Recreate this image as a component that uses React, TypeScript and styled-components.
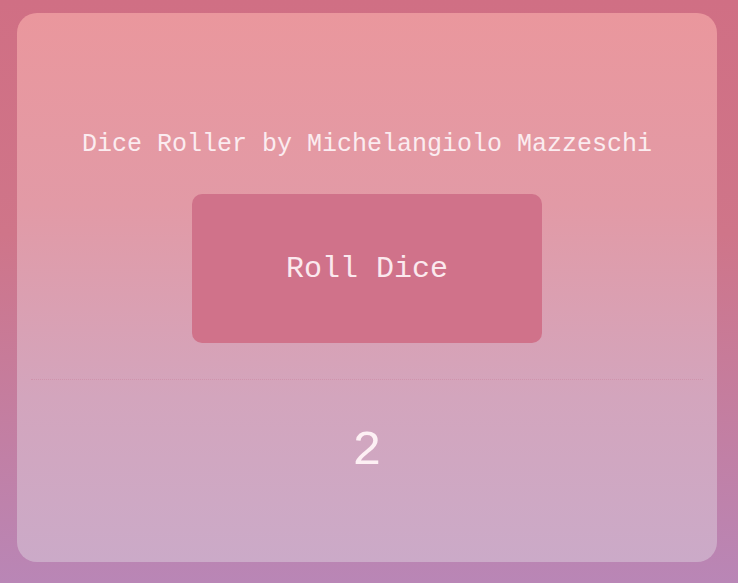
import React, { useState } from "react";
import styled, { createGlobalStyle } from "styled-components";

const Global = createGlobalStyle`
  html, body { margin: 0; padding: 0; }
  body {
    width: 738px;
    height: 583px;
    overflow: hidden;
    background: linear-gradient(180deg, #d06f84 0%, #cf7589 40%, #b986b6 100%);
    font-family: "Liberation Mono", "Courier New", monospace;
  }
`;

const Page = styled.div`
  width: 738px;
  height: 583px;
  box-sizing: border-box;
  padding: 13px 21px 21px 17px;
  display: flex;
`;

const Card = styled.main`
  flex: 1;
  border-radius: 20px;
  background: linear-gradient(180deg, #ea979d 0%, #e29aa6 35%, #d3a5bd 70%, #cbaac8 100%);
  display: flex;
  flex-direction: column;
  align-items: center;
  padding-top: 117px;
`;

const Title = styled.h1`
  margin: 0;
  font-family: "Liberation Mono", "Courier New", monospace;
  font-weight: normal;
  font-size: 25px;
  line-height: 30px;
  color: #fbecf0;
`;

const RollButton = styled.button`
  margin-top: 34px;
  width: 350px;
  height: 149px;
  border: none;
  border-radius: 10px;
  background: #d0728a;
  color: #fbe9ee;
  font-family: "Liberation Mono", "Courier New", monospace;
  font-size: 30px;
  cursor: pointer;
  padding: 0;
`;

const Divider = styled.hr`
  width: 672px;
  margin: 36px 0 0;
  border: none;
  border-top: 1px dotted rgba(200, 110, 140, 0.3);
  height: 0;
`;

const Result = styled.div`
  margin-top: 47px;
  font-family: "Liberation Mono", "Courier New", monospace;
  font-size: 49px;
  line-height: 49px;
  color: #fdf0f4;
`;

export default function App() {
  const [value, setValue] = useState(2);
  return (
    <Page>
      <Global />
      <Card>
        <Title>Dice Roller by Michelangiolo Mazzeschi</Title>
        <RollButton onClick={() => setValue(1 + Math.floor(Math.random() * 6))}>
          Roll Dice
        </RollButton>
        <Divider />
        <Result>{value}</Result>
      </Card>
    </Page>
  );
}
